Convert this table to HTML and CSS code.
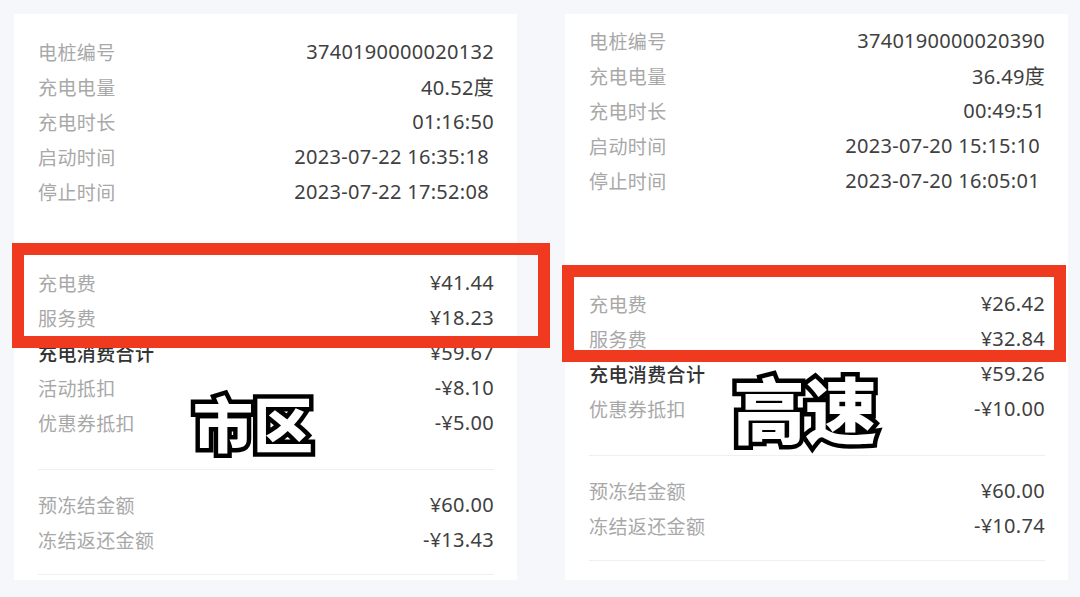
FILE: index.html
```html
<!DOCTYPE html>
<html lang="zh-CN">
<head>
    <meta charset="UTF-8">
    <meta name="viewport" content="width=device-width, initial-scale=1.0">
    <title>充电账单对比</title>
    <link rel="stylesheet" href="styles.css">
</head>
<body>
    <div class="page">
        <div class="card city">
            <div class="group top">
                <div class="row"><span class="k">电桩编号</span><span class="v">3740190000020132</span></div>
                <div class="row"><span class="k">充电电量</span><span class="v">40.52度</span></div>
                <div class="row"><span class="k">充电时长</span><span class="v">01:16:50</span></div>
                <div class="row"><span class="k">启动时间</span><span class="v inset">2023-07-22 16:35:18</span></div>
                <div class="row"><span class="k">停止时间</span><span class="v inset">2023-07-22 17:52:08</span></div>
            </div>
            <div class="group fee">
                <div class="row"><span class="k">充电费</span><span class="v">¥41.44</span></div>
                <div class="row"><span class="k">服务费</span><span class="v">¥18.23</span></div>
                <div class="row total"><span class="k">充电消费合计</span><span class="v">¥59.67</span></div>
                <div class="row"><span class="k">活动抵扣</span><span class="v">-¥8.10</span></div>
                <div class="row"><span class="k">优惠券抵扣</span><span class="v">-¥5.00</span></div>
            </div>
            <div class="group frozen">
                <div class="row"><span class="k">预冻结金额</span><span class="v">¥60.00</span></div>
                <div class="row"><span class="k">冻结返还金额</span><span class="v">-¥13.43</span></div>
            </div>
            <div class="mark"></div>
            <div class="tag">市区</div>
        </div>

        <div class="card highway">
            <div class="group top">
                <div class="row"><span class="k">电桩编号</span><span class="v">3740190000020390</span></div>
                <div class="row"><span class="k">充电电量</span><span class="v">36.49度</span></div>
                <div class="row"><span class="k">充电时长</span><span class="v">00:49:51</span></div>
                <div class="row"><span class="k">启动时间</span><span class="v inset">2023-07-20 15:15:10</span></div>
                <div class="row"><span class="k">停止时间</span><span class="v inset">2023-07-20 16:05:01</span></div>
            </div>
            <div class="group fee">
                <div class="row"><span class="k">充电费</span><span class="v">¥26.42</span></div>
                <div class="row"><span class="k">服务费</span><span class="v">¥32.84</span></div>
                <div class="row total"><span class="k">充电消费合计</span><span class="v">¥59.26</span></div>
                <div class="row"><span class="k">优惠券抵扣</span><span class="v">-¥10.00</span></div>
            </div>
            <div class="group frozen">
                <div class="row"><span class="k">预冻结金额</span><span class="v">¥60.00</span></div>
                <div class="row"><span class="k">冻结返还金额</span><span class="v">-¥10.74</span></div>
            </div>
            <div class="mark"></div>
            <div class="tag">高速</div>
        </div>
    </div>
</body>
</html>
```

FILE: styles.css
```css
*{
    margin: 0;
    padding: 0;
    box-sizing: border-box;
}
body{
    width: 1080px;
    height: 597px;
    overflow: hidden;
    background: #f5f7fa;
    font-family: "Noto Sans", "Noto Sans CJK SC", sans-serif;
}
.page{
    display: flex;
    gap: 48px;
    padding: 14px 0 0 14px;
}
.card{
    position: relative;
    width: 503px;
    height: 566px;
    background: #fff;
    padding: 0 23px 0 24px;
}
.row{
    height: 35px;
    display: flex;
    align-items: center;
    justify-content: space-between;
    font-size: 19px;
}
.k{
    color: #a8a8a8;
    letter-spacing: 0.4px;
}
.v{
    color: #404040;
    font-size: 20px;
    letter-spacing: 0.3px;
}
.v.inset{
    margin-right: 5px;
}
.total .k{
    color: #333;
    font-weight: 500;
}
.group.fee{
    padding-bottom: 29px;
    border-bottom: 1px solid #efefef;
}
.group.frozen{
    padding: 17px 0;
    border-bottom: 1px solid #efefef;
}
.city .top{
    padding-top: 20px;
    margin-bottom: 56px;
}
.highway .top{
    padding-top: 9px;
    margin-bottom: 88px;
}
.mark{
    position: absolute;
    border: 12px solid #ef3a1f;
}
.city .mark{
    left: -2px;
    top: 229px;
    width: 538px;
    height: 105px;
}
.highway .mark{
    left: -3px;
    top: 251px;
    width: 504px;
    height: 97px;
}
.tag{
    position: absolute;
    line-height: 1;
    font-family: "Noto Sans CJK SC", sans-serif;
    font-weight: 900;
    color: #fff;
    -webkit-text-stroke: 9px #000;
    paint-order: stroke fill;
}
.city .tag{
    left: 179px;
    top: 378px;
    font-size: 60px;
}
.highway .tag{
    left: 168px;
    top: 357px;
    font-size: 72px;
}
```
